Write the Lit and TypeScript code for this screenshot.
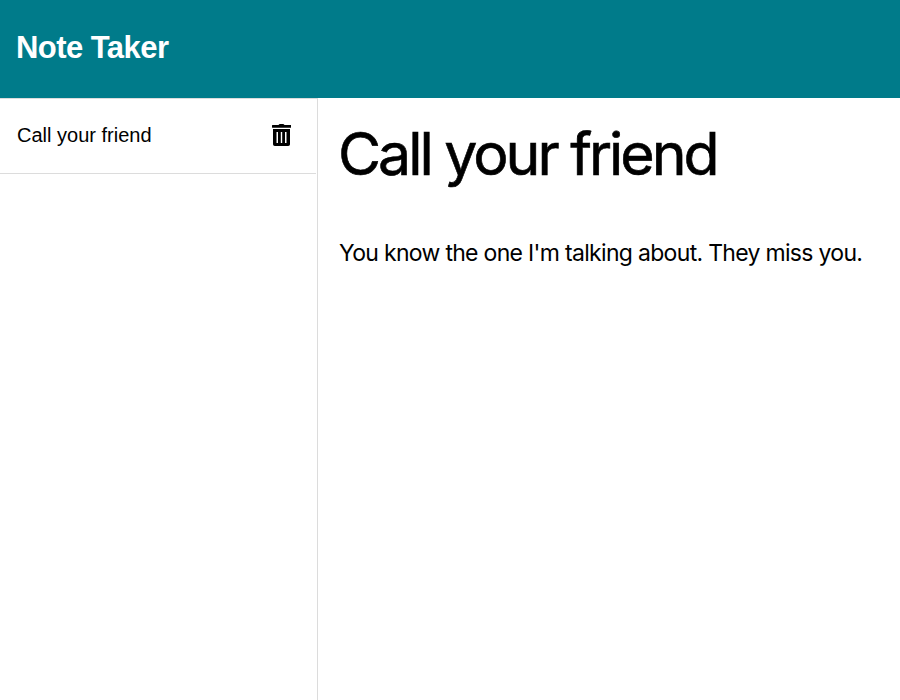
import { LitElement, html, css, svg } from "lit";
import { customElement } from "lit/decorators.js";

const trashIcon = svg`
  <path d="M6.5 1 7 .4Q7.3 0 7.7 0h3.6q.4 0 .7.4l.5.6h6.2q.5 0 .5.5v1.7q0 .5-.5.5H.5q-.5 0-.5-.5V1.5Q0 1 .5 1z"/>
  <path fill-rule="evenodd" d="M1 5h17v15.2q0 1.8-1.8 1.8H2.8Q1 22 1 20.2zM4.5 8v11H6V8zM8.8 8v11h1.4V8zM13 8v11h1.5V8z"/>`;

@customElement("app-root")
export class AppRoot extends LitElement {
  static styles = css`
    :host {
      display: flex;
      flex-direction: column;
      height: 100vh;
      overflow: hidden;
      background: #fff;
      color: #000;
      font-family: "Liberation Sans", Arial, sans-serif;
    }
    header {
      flex: none;
      box-sizing: border-box;
      height: 98px;
      padding: 30px 16px 0;
      background: #007b8a;
    }
    .brand {
      display: inline-block;
      color: #fff;
      font-size: 31px;
      font-weight: 700;
      line-height: 36px;
      letter-spacing: -0.55px;
      white-space: nowrap;
    }
    main {
      flex: 1;
      display: grid;
      grid-template-columns: 318px 1fr;
      min-height: 0;
    }
    .list {
      box-sizing: border-box;
      border-top: 1px solid #dcdcdc;
      border-right: 1px solid #dcdcdc;
      padding-right: 1px;
    }
    .item {
      box-sizing: border-box;
      height: 75px;
      display: flex;
      align-items: center;
      justify-content: space-between;
      padding: 0 25px 2px 17px;
      border-bottom: 1px solid #dcdcdc;
    }
    .title {
      font-size: 20px;
      line-height: 30px;
      white-space: nowrap;
    }
    .trash {
      display: block;
      width: 19px;
      height: 22px;
    }
    .note {
      padding: 20px 0 0 21px;
      font-family: Inter, sans-serif;
      white-space: nowrap;
    }
    h1 {
      margin: 0 0 0 -1px;
      font-size: 59px;
      font-weight: 400;
      line-height: 72px;
      letter-spacing: -3.03px;
      -webkit-text-stroke: 0.6px #000;
    }
    p {
      margin: 45px 0 0;
      font-size: 23px;
      line-height: 36px;
      letter-spacing: -0.69px;
    }
  `;

  render() {
    return html`
      <header><span class="brand">Note Taker</span></header>
      <main>
        <section class="list">
          <div class="item">
            <span class="title">Call your friend</span>
            <svg class="trash" viewBox="0 0 19 22">${trashIcon}</svg>
          </div>
        </section>
        <section class="note">
          <h1>Call your friend</h1>
          <p>You know the one I'm talking about. They miss you.</p>
        </section>
      </main>
    `;
  }
}
